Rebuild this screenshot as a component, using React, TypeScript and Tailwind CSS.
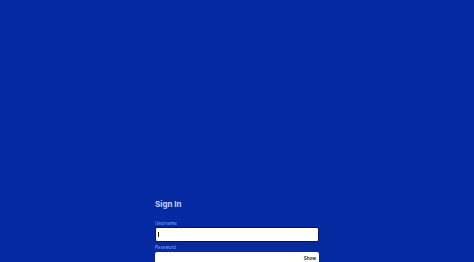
export default function App() {
  return (
    <div
      className="w-full h-[262px] overflow-hidden bg-[#0529a0]"
      style={{ fontFamily: "Inter, 'Liberation Sans', sans-serif" }}
    >
      <div className="mx-auto w-[164px] pt-[199px]">
        <h1 className="text-[8px] leading-[10px] font-bold text-[#c6d6ff]">
          Sign In
        </h1>

        <label className="block mt-[12px] text-[4.5px] leading-[6px] text-[#8fadff]">
          Username
        </label>
        <div className="h-[15px] rounded-[2px] bg-white border-[1.5px] border-[#0b1643] flex items-center px-[2px]">
          <div className="w-[1px] h-[5px] bg-[#222]" />
        </div>

        <label className="block mt-[3px] text-[4.5px] leading-[6px] text-[#8fadff]">
          Password
        </label>
        <div className="mt-[1px] h-[15px] rounded-[2px] bg-white flex items-center justify-end px-[3px]">
          <span className="text-[4.5px] font-bold text-[#333]">Show</span>
        </div>
      </div>
    </div>
  );
}
